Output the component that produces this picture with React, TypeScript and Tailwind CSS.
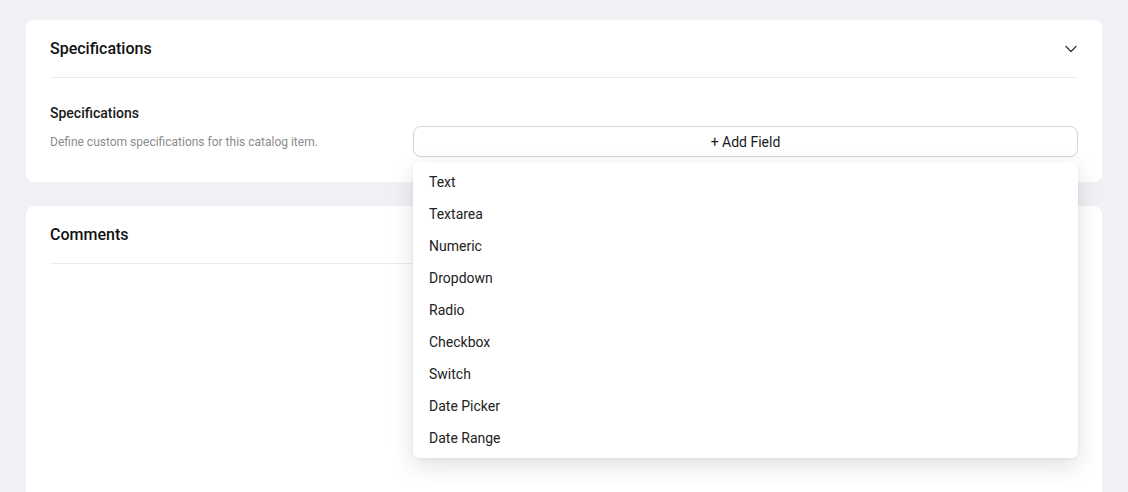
import { useState } from "react";

const fieldTypes = [
  "Text",
  "Textarea",
  "Numeric",
  "Dropdown",
  "Radio",
  "Checkbox",
  "Switch",
  "Date Picker",
  "Date Range",
];

function Chevron() {
  return (
    <svg width="12" height="8" viewBox="0 0 12 8" fill="none" className="text-[#333]">
      <path d="M1 1.5L6 6.5L11 1.5" stroke="currentColor" strokeWidth="1.2" strokeLinecap="round" strokeLinejoin="round" />
    </svg>
  );
}

function AddFieldMenu() {
  const [open] = useState(true);
  return (
    <div className="relative flex-1">
      <button className="w-full h-[31px] rounded-lg border border-[#d6d6d6] bg-white text-sm text-[#1a1a1a] shadow-[0_1px_2px_rgba(0,0,0,0.04)]">
        + Add Field
      </button>
      {open && (
        <div className="absolute left-0 right-0 top-full mt-[5px] z-10 rounded-md bg-white py-1 shadow-[0_8px_24px_rgba(0,0,0,0.12),0_1px_4px_rgba(0,0,0,0.06)]">
          {fieldTypes.map((t) => (
            <div key={t} className="h-8 flex items-center px-4 text-sm text-[#222]">
              {t}
            </div>
          ))}
        </div>
      )}
    </div>
  );
}

export default function App() {
  return (
    <div className="h-screen overflow-hidden bg-[#f0f1f5] px-[26px] pt-5 font-['Roboto',sans-serif]">
      <div className="rounded-lg bg-white px-6 pb-[25px]">
        <div className="flex items-center justify-between pt-[17px] pb-4 border-b border-[#ebebeb]">
          <h2 className="text-base leading-6 font-medium text-[#111]">Specifications</h2>
          <span className="mr-[1px] -mt-[1px]">
            <Chevron />
          </span>
        </div>
        <div className="flex gap-6 pt-[25px]">
          <div className="w-[339px]">
            <div className="text-sm leading-5 font-medium text-[#1a1a1a]">Specifications</div>
            <div className="mt-[11px] text-xs leading-4 text-[#8c8c8c]">
              Define custom specifications for this catalog item.
            </div>
          </div>
          <div className="flex-1 flex pt-[23px]">
            <AddFieldMenu />
          </div>
        </div>
      </div>

      <div className="mt-6 rounded-lg bg-white px-6 min-h-[300px]">
        <div className="pt-[17px] pb-4 border-b border-[#ebebeb]">
          <h2 className="text-base leading-6 font-medium text-[#111]">Comments</h2>
        </div>
      </div>
    </div>
  );
}
